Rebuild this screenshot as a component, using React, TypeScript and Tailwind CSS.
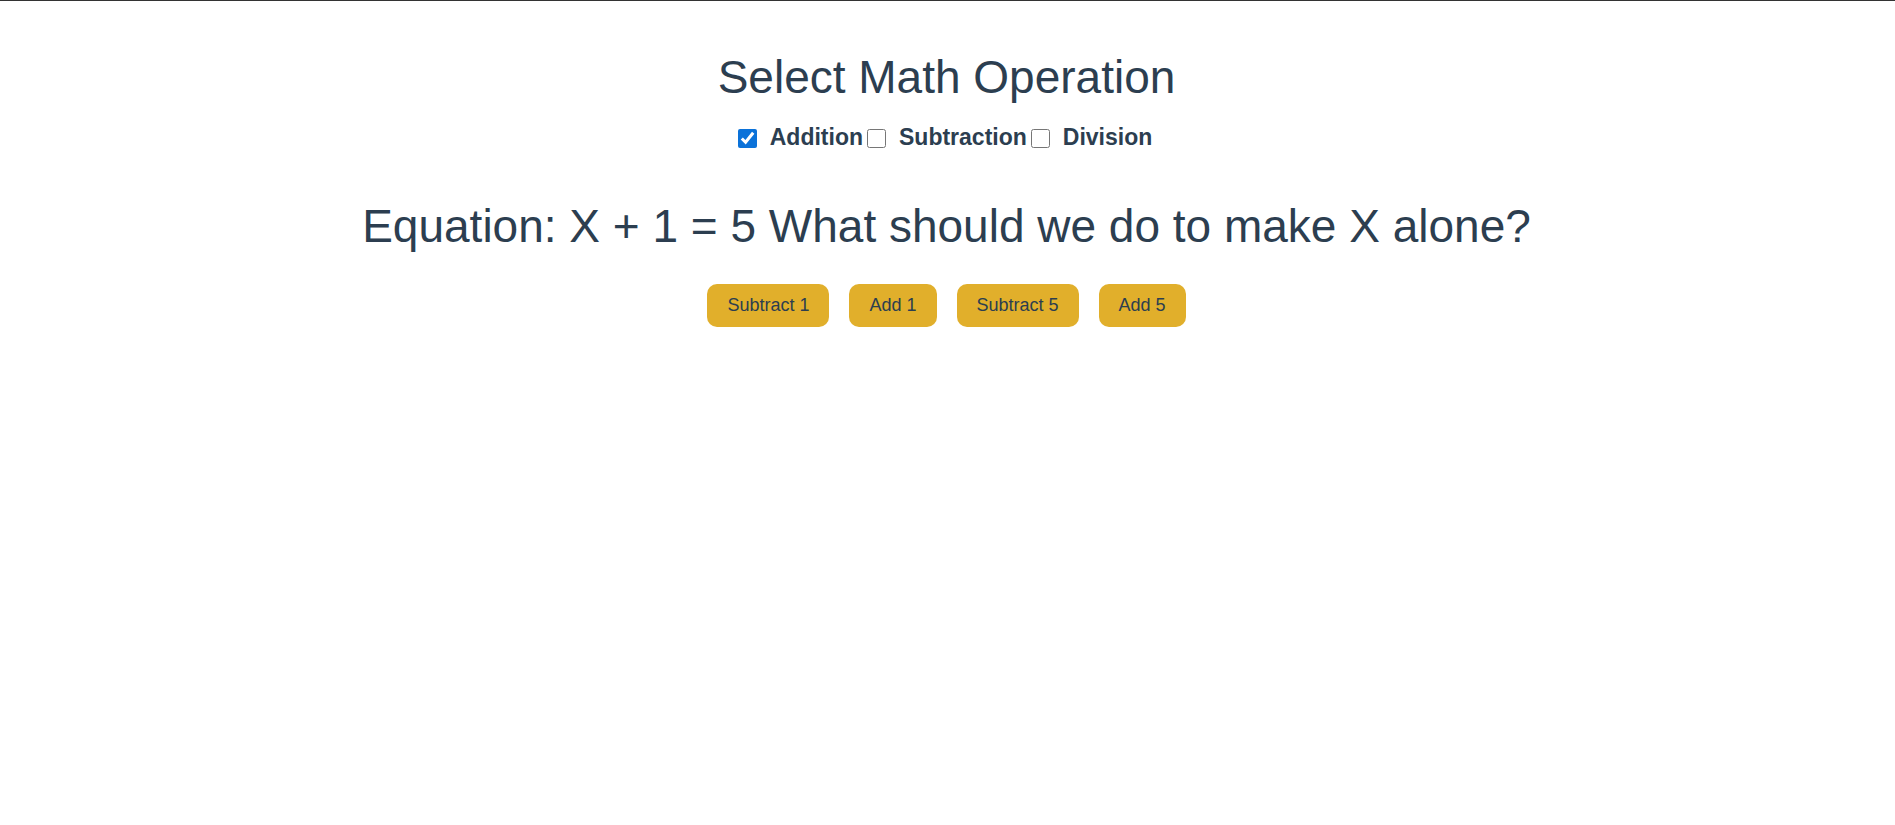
import { useState } from "react";

const OPERATIONS = ["Addition", "Subtraction", "Division"];
const ANSWERS = ["Subtract 1", "Add 1", "Subtract 5", "Add 5"];

export default function App() {
  const [selected, setSelected] = useState<string[]>(["Addition"]);

  const toggle = (op: string) =>
    setSelected((prev) =>
      prev.includes(op) ? prev.filter((o) => o !== op) : [...prev, op]
    );

  return (
    <div className="min-h-screen bg-white text-center text-[#2c3e50] font-['Liberation_Sans',Arial,sans-serif]">
      <div className="h-px bg-[#333]" />

      <div className="pr-[2px]">
        <h1 className="mt-[50px] text-[46px] leading-[53px] font-normal">
          Select Math Operation
        </h1>

        <div className="mt-[20px] flex items-center justify-center pr-[3px] text-[23px] leading-[26px] font-bold">
          {OPERATIONS.map((op, i) => (
            <label key={op} className="flex items-center">
              <input
                type="checkbox"
                checked={selected.includes(op)}
                onChange={() => toggle(op)}
                className={
                  i === 0
                    ? "m-0 mr-[13px] mt-[3px] h-[19px] w-[19px] accent-[#0b72d9]"
                    : "m-0 mr-[13px] ml-[4px] mt-[3px] h-[19px] w-[19px] accent-[#0b72d9]"
                }
              />
              {op}
            </label>
          ))}
        </div>

        <h2 className="mt-[50px] text-[46px] leading-[53px] font-normal">
          Equation: X + 1 = 5 What should we do to make X alone?
        </h2>

        <div className="mt-[31px] flex justify-center gap-[20px]">
          {ANSWERS.map((a) => (
            <button
              key={a}
              className="h-[43px] rounded-[10px] bg-[#e1af2b] px-[20px] text-[18px] leading-[21px] text-[#2c3e50]"
            >
              {a}
            </button>
          ))}
        </div>
      </div>
    </div>
  );
}
